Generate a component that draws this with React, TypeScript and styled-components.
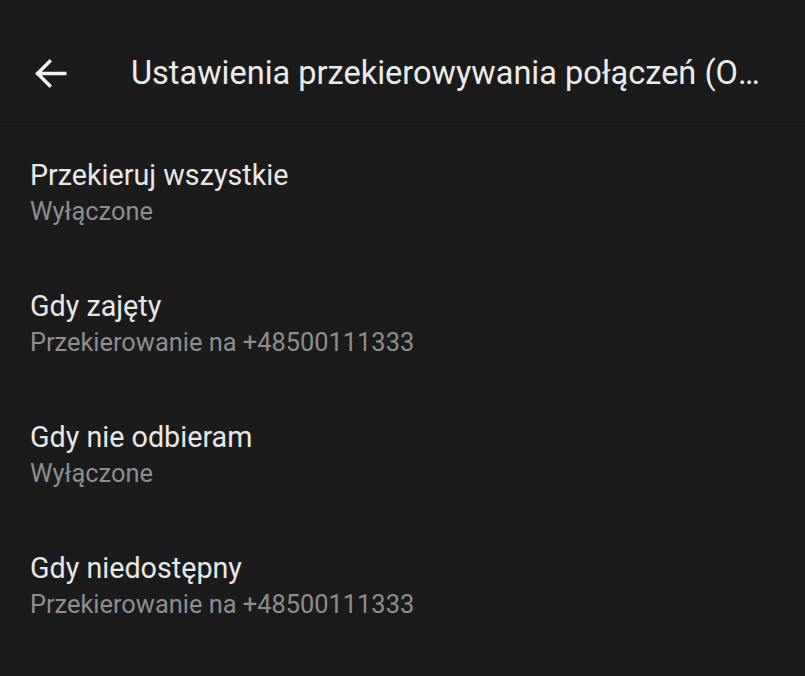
import React from "react";
import styled, { createGlobalStyle } from "styled-components";

const GlobalStyle = createGlobalStyle`
  html, body {
    margin: 0;
    padding: 0;
    background: #1b1b1b;
    font-family: Roboto, "Noto Sans", sans-serif;
  }
`;

const Screen = styled.div`
  width: 805px;
  height: 676px;
  background: #1b1b1b;
  overflow: hidden;
`;

const Toolbar = styled.header`
  height: 125px;
  box-sizing: border-box;
  display: flex;
  align-items: center;
  padding: 22px 44px 0 29px;
  border-bottom: 1px solid #202020;
`;

const BackButton = styled.button`
  background: none;
  border: none;
  padding: 0;
  margin-right: 59px;
  width: 43px;
  height: 43px;
  flex-shrink: 0;
  display: flex;
  align-items: center;
  justify-content: center;
  color: #f2f2f2;
`;

const Title = styled.h1`
  margin: 0;
  font-size: 32.5px;
  line-height: 40px;
  font-weight: 400;
  color: #ececec;
  white-space: nowrap;
  overflow: hidden;
  text-overflow: ellipsis;
  min-width: 0;
`;

const List = styled.div`
  display: flex;
  flex-direction: column;
`;

const Item = styled.div`
  padding: 32px 30px 29px;
  display: flex;
  flex-direction: column;
`;

const ItemTitle = styled.div`
  font-size: 28.7px;
  line-height: 36px;
  color: #e8e8e8;
`;

const ItemSummary = styled.div`
  font-size: 25.4px;
  line-height: 36px;
  margin-bottom: -2px;
  color: #8e8e8e;
`;

const settings = [
  { title: "Przekieruj wszystkie", summary: "Wyłączone" },
  { title: "Gdy zajęty", summary: "Przekierowanie na +48500111333" },
  { title: "Gdy nie odbieram", summary: "Wyłączone" },
  { title: "Gdy niedostępny", summary: "Przekierowanie na +48500111333" },
];

const App: React.FC = () => (
  <Screen>
    <GlobalStyle />
    <Toolbar>
      <BackButton aria-label="Wstecz">
        <svg width="43" height="43" viewBox="0 0 24 24" fill="none">
          <path
            d="M20 12H4.8M11.5 5.3L4.8 12l6.7 6.7"
            stroke="currentColor"
            strokeWidth="1.9"
            strokeLinecap="square"
          />
        </svg>
      </BackButton>
      <Title>Ustawienia przekierowywania połączeń (Operator)</Title>
    </Toolbar>
    <List>
      {settings.map((s) => (
        <Item key={s.title}>
          <ItemTitle>{s.title}</ItemTitle>
          <ItemSummary>{s.summary}</ItemSummary>
        </Item>
      ))}
    </List>
  </Screen>
);

export default App;
